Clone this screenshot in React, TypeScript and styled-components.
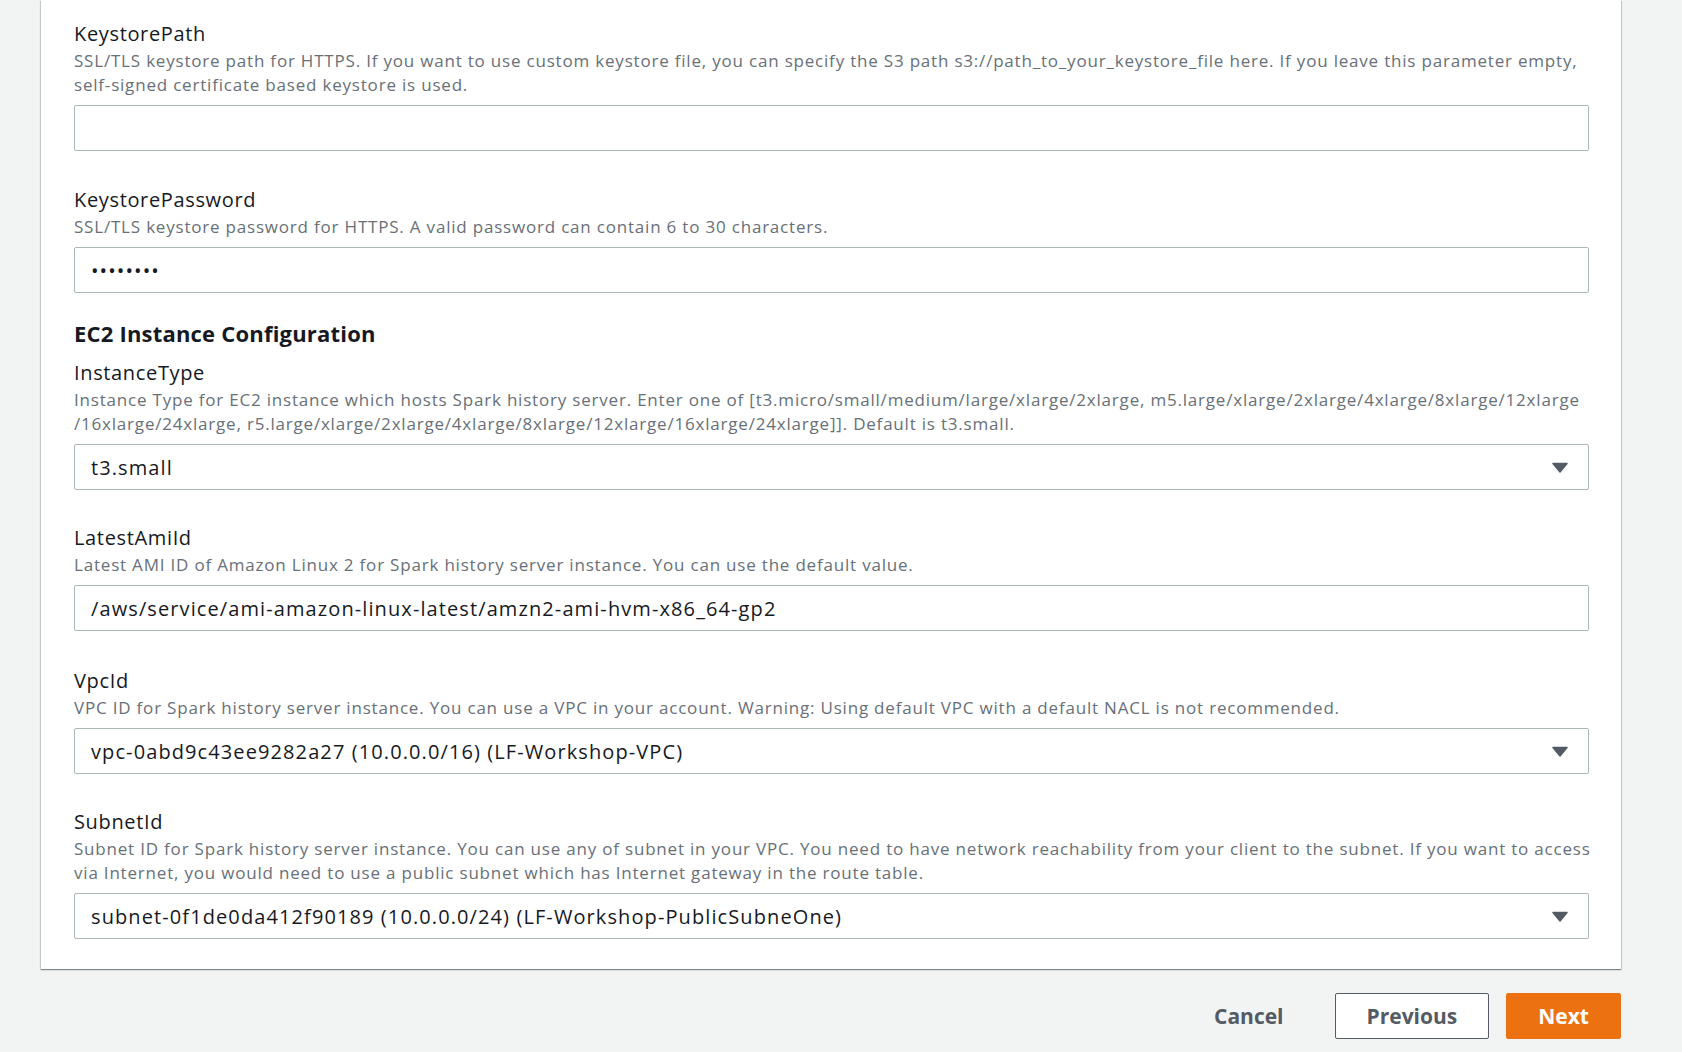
import React from "react";
import styled, { createGlobalStyle } from "styled-components";

const GlobalStyle = createGlobalStyle`
    body {
        margin: 0;
        background: #f2f3f3;
        font-family: "Open Sans", "Liberation Sans", sans-serif;
        color: #16191f;
    }
`;

const Page = styled.div`
    width: 1682px;
    height: 1052px;
    box-sizing: border-box;
    padding: 0 61px 0 41px;
    overflow: hidden;
`;

const Card = styled.div`
    background: #ffffff;
    padding: 19px 32px 30px 33px;
    box-shadow: 0 1px 1px 0 rgba(0, 28, 36, 0.3), 1px 1px 1px 0 rgba(0, 28, 36, 0.15),
        -1px 1px 1px 0 rgba(0, 28, 36, 0.15);
`;

const Field = styled.div<{ gap: number }>`
    display: flex;
    flex-direction: column;
    margin-bottom: ${({ gap }) => `${gap}px`};
`;

const Label = styled.div`
    font-size: 20px;
    line-height: 30px;
    letter-spacing: 0.65px;
    color: #16191f;
`;

const Description = styled.div`
    font-size: 17px;
    line-height: 24px;
    letter-spacing: 0.8px;
    color: #687078;
    margin-bottom: 8px;
    white-space: nowrap;
`;

const SectionHeading = styled.h2`
    margin: 0 0 10px 0;
    font-size: 22px;
    line-height: 30px;
    font-weight: 700;
    letter-spacing: 0.2px;
    color: #16191f;
`;

const TextInput = styled.input`
    box-sizing: border-box;
    width: 100%;
    height: 46px;
    padding: 0 16px;
    border: 1px solid #aab7b8;
    border-radius: 2px;
    background: #ffffff;
    font-family: inherit;
    font-size: 20px;
    letter-spacing: 1.1px;
    color: #16191f;
    outline: none;
`;

const SelectBox = styled.div`
    box-sizing: border-box;
    display: flex;
    align-items: center;
    justify-content: space-between;
    height: 46px;
    padding: 0 20px 0 16px;
    border: 1px solid #aab7b8;
    border-radius: 2px;
    background: #ffffff;
    font-size: 20px;
    letter-spacing: 1.1px;
    color: #16191f;
`;

const Footer = styled.div`
    display: flex;
    justify-content: flex-end;
    align-items: center;
    margin-top: 24px;
`;

const Button = styled.button<{ variant: "link" | "normal" | "primary" }>`
    box-sizing: border-box;
    height: 46px;
    padding: 0 ${({ variant }) => (variant === "link" ? "20px" : "31px")};
    margin-left: ${({ variant }) => (variant === "primary" ? "17px" : "0")};
    margin-right: ${({ variant }) => (variant === "link" ? "30px" : "0")};
    border-radius: 2px;
    border: 1px solid
        ${({ variant }) =>
            variant === "primary" ? "#ec7211" : variant === "normal" ? "#545b64" : "transparent"};
    background: ${({ variant }) => (variant === "primary" ? "#ec7211" : variant === "normal" ? "#ffffff" : "transparent")};
    color: ${({ variant }) => (variant === "primary" ? "#ffffff" : "#545b64")};
    font-family: inherit;
    font-size: 21px;
    font-weight: 700;
    cursor: pointer;
`;

const Caret = () => (
    <svg width="16" height="11" viewBox="0 0 16 11">
        <path d="M1 1.5 H15 L8 10 Z" fill="#545b64" stroke="#545b64" strokeWidth="1.5" strokeLinejoin="round" />
    </svg>
);

interface FieldProps {
    label: string;
    description: React.ReactNode;
    gap?: number;
    children: React.ReactNode;
}

const FormField: React.FC<FieldProps> = ({ label, description, gap = 33, children }) => (
    <Field gap={gap}>
        <Label>{label}</Label>
        <Description>{description}</Description>
        {children}
    </Field>
);

const App: React.FC = () => {
    return (
        <Page>
            <GlobalStyle />
            <Card>
                <FormField
                    label="KeystorePath"
                    gap={34}
                    description={
                        <>
                            SSL/TLS keystore path for HTTPS. If you want to use custom keystore file, you can specify the S3 path s3://path_to_your_keystore_file here. If you leave this parameter empty,
                            <br />
                            self-signed certificate based keystore is used.
                        </>
                    }
                >
                    <TextInput readOnly defaultValue="" />
                </FormField>
                <FormField
                    label="KeystorePassword"
                    description="SSL/TLS keystore password for HTTPS. A valid password can contain 6 to 30 characters."
                    gap={25}
                >
                    <TextInput readOnly type="password" defaultValue="password" />
                </FormField>

                <SectionHeading>EC2 Instance Configuration</SectionHeading>

                <FormField
                    label="InstanceType"
                    description={
                        <>
                            Instance Type for EC2 instance which hosts Spark history server. Enter one of [t3.micro/small/medium/large/xlarge/2xlarge, m5.large/xlarge/2xlarge/4xlarge/8xlarge/12xlarge
                            <br />
                            /16xlarge/24xlarge, r5.large/xlarge/2xlarge/4xlarge/8xlarge/12xlarge/16xlarge/24xlarge]]. Default is t3.small.
                        </>
                    }
                >
                    <SelectBox>
                        <span>t3.small</span>
                        <Caret />
                    </SelectBox>
                </FormField>
                <FormField
                    label="LatestAmiId"
                    gap={35}
                    description="Latest AMI ID of Amazon Linux 2 for Spark history server instance. You can use the default value."
                >
                    <TextInput readOnly defaultValue="/aws/service/ami-amazon-linux-latest/amzn2-ami-hvm-x86_64-gp2" />
                </FormField>
                <FormField
                    label="VpcId"
                    description="VPC ID for Spark history server instance. You can use a VPC in your account. Warning: Using default VPC with a default NACL is not recommended."
                >
                    <SelectBox>
                        <span>vpc-0abd9c43ee9282a27 (10.0.0.0/16) (LF-Workshop-VPC)</span>
                        <Caret />
                    </SelectBox>
                </FormField>
                <FormField
                    label="SubnetId"
                    gap={0}
                    description={
                        <>
                            Subnet ID for Spark history server instance. You can use any of subnet in your VPC. You need to have network reachability from your client to the subnet. If you want to access
                            <br />
                            via Internet, you would need to use a public subnet which has Internet gateway in the route table.
                        </>
                    }
                >
                    <SelectBox>
                        <span>subnet-0f1de0da412f90189 (10.0.0.0/24) (LF-Workshop-PublicSubneOne)</span>
                        <Caret />
                    </SelectBox>
                </FormField>
            </Card>
            <Footer>
                <Button variant="link">Cancel</Button>
                <Button variant="normal">Previous</Button>
                <Button variant="primary">Next</Button>
            </Footer>
        </Page>
    );
};

export default App;
